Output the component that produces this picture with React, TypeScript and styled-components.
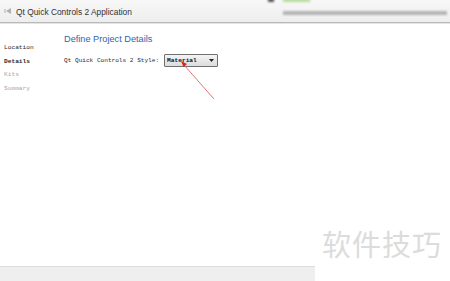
import styled, { createGlobalStyle } from "styled-components";

const GlobalStyle = createGlobalStyle`
  html, body {
    margin: 0;
    padding: 0;
    background: #ffffff;
  }
  #root {
    width: 450px;
    height: 281px;
    overflow: hidden;
  }
`;

const Window = styled.div`
  position: relative;
  width: 450px;
  height: 281px;
  display: flex;
  flex-direction: column;
  background: #ffffff;
`;

const TitleBar = styled.div`
  height: 22px;
  flex-shrink: 0;
  display: flex;
  align-items: center;
  background: linear-gradient(#f7f7f7, #eeeeee);
  border-bottom: 1px solid #b9b9b9;
  box-shadow: 0 1px 0 #e4e4e4;
  padding-left: 4px;
`;

const TitleIcon = styled.span`
  width: 8px;
  height: 8px;
  margin-right: 4px;
  display: flex;
  align-items: center;
`;

const TitleText = styled.span`
  font-family: "Liberation Sans", Arial, sans-serif;
  font-size: 8.4px;
  color: #333333;
  margin-top: 2px;
`;

const BlurArea = styled.div`
  margin-left: auto;
  width: 196px;
  height: 22px;
  position: relative;
  filter: blur(0.9px);
`;

const BlurLine = styled.div<{ $top: number; $left: number; $width: number; $color: string }>`
  position: absolute;
  top: ${({ $top }) => $top}px;
  left: ${({ $left }) => $left}px;
  width: ${({ $width }) => $width}px;
  height: 4px;
  background: ${({ $color }) => $color};
`;

const Body = styled.div`
  flex: 1;
  display: flex;
`;

const Nav = styled.div`
  width: 60px;
  padding: 21px 0 0 4px;
  display: flex;
  flex-direction: column;
  gap: 6.5px;
`;

const NavItem = styled.div<{ $state: "done" | "active" | "todo" }>`
  font-family: "Liberation Mono", monospace;
  font-size: 6.2px;
  line-height: 7px;
  color: ${({ $state }) => ($state === "todo" ? "#a8a8a8" : "#2a2a2a")};
  font-weight: ${({ $state }) => ($state === "active" ? 700 : 400)};
`;

const Content = styled.div`
  position: relative;
  flex: 1;
  padding: 11px 0 0 0;
`;

const Heading = styled.div`
  font-family: "Liberation Sans", Arial, sans-serif;
  font-size: 9.2px;
  color: #2f64ad;
  margin-bottom: 9px;
`;

const FieldRow = styled.div`
  display: flex;
  align-items: center;
  gap: 5px;
`;

const FieldLabel = styled.span`
  font-family: "Liberation Mono", monospace;
  font-size: 6.1px;
  color: #2a2a2a;
`;

const Combo = styled.div`
  width: 47px;
  height: 11px;
  margin-top: 1px;
  border: 1px solid #707070;
  border-radius: 1px;
  background: linear-gradient(#f4f4f4, #dcdcdc);
  display: flex;
  align-items: center;
  justify-content: space-between;
  padding: 0 3px 0 2px;
  box-sizing: content-box;
`;

const ComboText = styled.span`
  font-family: "Liberation Mono", monospace;
  font-size: 6.2px;
  font-weight: 700;
  color: #111111;
`;

const Arrow = styled.svg`
  position: absolute;
  left: 114px;
  top: 32px;
  overflow: visible;
`;

const Footer = styled.div`
  height: 14px;
  width: 315px;
  flex-shrink: 0;
  background: #efefef;
  border-top: 1px solid #dddddd;
`;

const Watermark = styled.div`
  position: absolute;
  right: 8px;
  top: 222px;
  font-family: "Noto Sans CJK SC", sans-serif;
  font-size: 29px;
  letter-spacing: 1px;
  color: #dcdcdc;
`;

export default function App() {
  return (
    <>
      <GlobalStyle />
      <Window>
        <TitleBar>
          <TitleIcon>
            <svg width="8" height="8" viewBox="0 0 8 8">
              <path d="M7 1 L2 4 L7 7 Z" fill="#b0b0b0" />
              <rect x="0.5" y="2" width="1" height="4" fill="#b0b0b0" />
            </svg>
          </TitleIcon>
          <TitleText>Qt Quick Controls 2 Application</TitleText>
          <BlurArea>
            <BlurLine $top={-2} $left={14} $width={6} $color="#555555" />
            <BlurLine $top={-2} $left={29} $width={27} $color="#b8dca0" />
            <BlurLine $top={11} $left={29} $width={164} $color="#b4b4b4" />
          </BlurArea>
        </TitleBar>
        <Body>
          <Nav>
            <NavItem $state="done">Location</NavItem>
            <NavItem $state="active">Details</NavItem>
            <NavItem $state="todo">Kits</NavItem>
            <NavItem $state="todo">Summary</NavItem>
          </Nav>
          <Content>
            <Heading>Define Project Details</Heading>
            <FieldRow>
              <FieldLabel>Qt Quick Controls 2 Style:</FieldLabel>
              <Combo>
                <ComboText>Material</ComboText>
                <svg width="5" height="3" viewBox="0 0 5 3">
                  <path d="M0 0 H5 L2.5 3 Z" fill="#222222" />
                </svg>
              </Combo>
            </FieldRow>
            <Arrow width="40" height="40" viewBox="0 0 40 40">
              <line x1="36" y1="44" x2="6" y2="10" stroke="#e0505a" strokeWidth="0.8" />
              <path d="M3 6 L9 9 L5.5 12 Z" fill="#e02020" />
            </Arrow>
          </Content>
        </Body>
        <Footer />
        <Watermark>软件技巧</Watermark>
      </Window>
    </>
  );
}
